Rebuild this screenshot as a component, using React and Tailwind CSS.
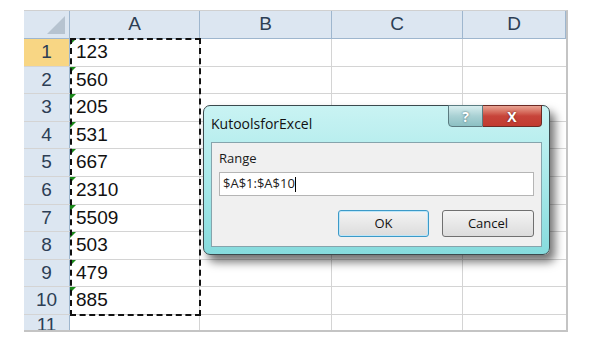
const COLS = [
  { label: "A", w: "w-[130px]" },
  { label: "B", w: "w-[132px]" },
  { label: "C", w: "w-[131px]" },
  { label: "D", w: "flex-1" },
];

const VALUES = ["123", "560", "205", "531", "667", "2310", "5509", "503", "479", "885"];

function Row({ n, value, last }) {
  return (
    <div className={`flex border-b border-[#d4d4d4] ${last ? "flex-1" : "h-[27.6px] shrink-0"}`}>
      <div
        className={`w-[46px] shrink-0 flex justify-center border-r border-[#9eb6ce] text-[19px] text-[#2c3e55] ${
          n === 1 ? "bg-[#f8d684]" : "bg-[#dce6f1]"
        } ${last ? "items-start leading-[20px]" : "items-center"}`}
      >
        {n}
      </div>
      <div className="relative w-[130px] shrink-0 border-r border-[#d4d4d4] flex items-center pl-[6px] text-[19px] text-[#111]">
        {value && (
          <span className="absolute left-0 top-0 w-0 h-0 border-t-[6px] border-r-[6px] border-t-[#1a8a1a] border-r-transparent" />
        )}
        {value}
      </div>
      <div className="w-[132px] shrink-0 border-r border-[#d4d4d4]" />
      <div className="w-[131px] shrink-0 border-r border-[#d4d4d4]" />
      <div className="flex-1" />
    </div>
  );
}

function Dialog() {
  return (
    <div className="absolute left-[203px] top-[105px] w-[347px] h-[150px] rounded-[7px] border border-[#3b4a4e] bg-gradient-to-b from-[#c9f3f3] via-[#a8e9ea] to-[#86dbdd] shadow-[5px_7px_10px_rgba(0,0,0,0.55)] flex flex-col font-['Open_Sans',sans-serif]">
      <div className="h-[36px] shrink-0 flex items-start justify-between">
        <div className="pl-[7px] pt-[7px] text-[14px] text-[#111]">KutoolsforExcel</div>
        <div className="flex mr-[7px] -mt-px">
          <div className="w-[35px] h-[22px] rounded-bl-[4px] border border-[#5b7b80] bg-gradient-to-b from-[#d8eeef] via-[#a9d1d4] to-[#8cc0c3] flex items-center justify-center text-[14px] font-bold text-white [text-shadow:0_0_2px_#3a5a60]">
            ?
          </div>
          <div className="w-[59px] h-[22px] rounded-br-[4px] border border-l-0 border-[#6b2a24] bg-gradient-to-b from-[#e8a393] via-[#c7443a] to-[#c23b30] flex items-center justify-center text-[14px] font-bold text-white [text-shadow:0_0_2px_#5a1a14]">
            X
          </div>
        </div>
      </div>
      <div className="mx-[7px] mb-[7px] flex-1 border border-[#86a4ac] bg-[#f0f0f0] flex flex-col px-[7px] pt-[9px]">
        <div className="text-[13px] text-[#1a1a1a] leading-none h-[20px]">Range</div>
        <div className="h-[24px] border border-[#b5b5b5] bg-white flex items-center pl-[3px] text-[13px] text-[#222]">
          $A$1:$A$10<span className="w-px h-[15px] bg-black" />
        </div>
        <div className="flex justify-end gap-[13px] mt-[14px]">
          <div className="w-[91px] h-[27px] rounded-[3px] border border-[#3c9ac8] bg-gradient-to-b from-[#f4f4f4] to-[#dcdcdc] shadow-[inset_0_0_0_1px_#bfe6f8] flex items-center justify-center text-[13px] text-[#111]">
            OK
          </div>
          <div className="w-[92px] h-[27px] rounded-[3px] border border-[#707070] bg-gradient-to-b from-[#f4f4f4] to-[#dcdcdc] flex items-center justify-center text-[13px] text-[#111]">
            Cancel
          </div>
        </div>
      </div>
    </div>
  );
}

export default function App() {
  return (
    <div className="w-[600px] h-[343px] bg-white relative overflow-hidden font-['Liberation_Sans',Arial,sans-serif]">
      <div className="absolute left-[24px] top-[10px] w-[544px] h-[322px] border-t border-[#d0d0d0] border-r-2 border-b-2 border-r-[#c4c4c4] border-b-[#c4c4c4] flex flex-col overflow-hidden">
        <div className="h-[28px] shrink-0 flex bg-[#dce6f1] border-b border-[#9eb6ce]">
          <div className="w-[46px] shrink-0 relative border-r border-[#9eb6ce]">
            <span className="absolute right-[4px] bottom-[4px] w-0 h-0 border-l-[18px] border-b-[18px] border-l-transparent border-b-[#b6c3d0]" />
          </div>
          {COLS.map((c) => (
            <div
              key={c.label}
              className={`${c.w} shrink-0 flex items-center justify-center border-r border-[#9eb6ce] text-[19px] text-[#2c3e55]`}
            >
              {c.label}
            </div>
          ))}
        </div>
        {VALUES.map((v, i) => (
          <Row key={i} n={i + 1} value={v} />
        ))}
        <Row n={11} last />
        <div className="absolute left-[46px] top-[27px] w-[131px] h-[278px] border-2 border-dashed border-[#111]" />
      </div>
      <Dialog />
    </div>
  );
}
